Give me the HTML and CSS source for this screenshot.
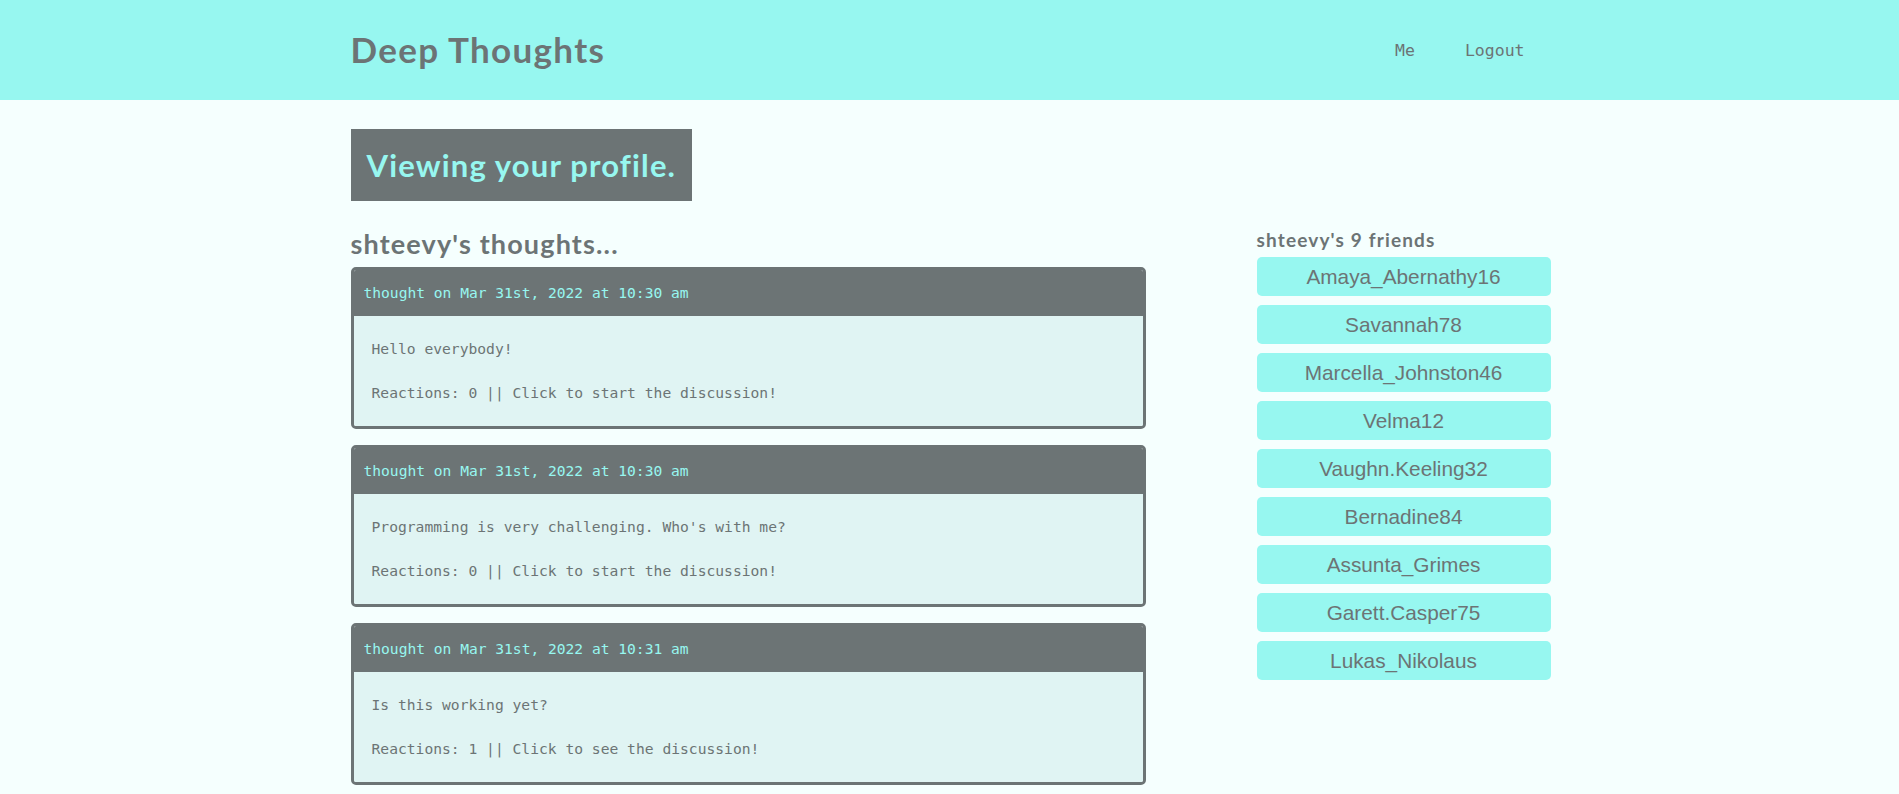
FILE: index.html
```html
<!DOCTYPE html>
<html lang="en">
<head>
<meta charset="utf-8">
<title>Deep Thoughts</title>
<link rel="stylesheet" href="styles.css">
</head>
<body>
<header class="site-header">
  <div class="container header-inner">
    <a class="brand" href="#">Deep Thoughts</a>
    <nav class="nav">
      <a href="#">Me</a>
      <a href="#">Logout</a>
    </nav>
  </div>
</header>
<main class="container main">
  <div class="profile-banner">
    <h2>Viewing your profile.</h2>
  </div>
  <div class="layout">
    <section class="thoughts">
      <h3 class="thoughts-title">shteevy's thoughts...</h3>
      <div class="card">
        <p class="card-header">thought on Mar 31st, 2022 at 10:30 am</p>
        <div class="card-body">
          <p>Hello everybody!</p>
          <p>Reactions: 0 || Click to start the discussion!</p>
        </div>
      </div>
      <div class="card">
        <p class="card-header">thought on Mar 31st, 2022 at 10:30 am</p>
        <div class="card-body">
          <p>Programming is very challenging. Who's with me?</p>
          <p>Reactions: 0 || Click to start the discussion!</p>
        </div>
      </div>
      <div class="card">
        <p class="card-header">thought on Mar 31st, 2022 at 10:31 am</p>
        <div class="card-body">
          <p>Is this working yet?</p>
          <p>Reactions: 1 || Click to see the discussion!</p>
        </div>
      </div>
    </section>
    <aside class="friends">
      <h5 class="friends-title">shteevy's 9 friends</h5>
      <button class="friend">Amaya_Abernathy16</button>
      <button class="friend">Savannah78</button>
      <button class="friend">Marcella_Johnston46</button>
      <button class="friend">Velma12</button>
      <button class="friend">Vaughn.Keeling32</button>
      <button class="friend">Bernadine84</button>
      <button class="friend">Assunta_Grimes</button>
      <button class="friend">Garett.Casper75</button>
      <button class="friend">Lukas_Nikolaus</button>
    </aside>
  </div>
</main>
</body>
</html>
```

FILE: styles.css
```css
* { box-sizing: border-box; }

html, body {
  margin: 0;
  padding: 0;
}

body {
  background: #f5fffe;
  color: #6c7475;
  font-family: "Lato", "Open Sans", sans-serif;
  overflow: hidden;
}

.container {
  width: 1200px;
  margin: 0 auto;
}

.site-header {
  background: #97f7f0;
  height: 100px;
}

.header-inner {
  height: 100%;
  display: flex;
  align-items: center;
  justify-content: space-between;
}

.brand {
  color: #6c7475;
  text-decoration: none;
  font-family: "Lato", sans-serif;
  font-weight: 700;
  font-size: 35px;
  letter-spacing: 1.3px;
  padding-left: 1px;
  margin-top: -2px;
}

.nav {
  display: flex;
  gap: 50px;
  padding-right: 25px;
}

.nav a {
  color: #6c7475;
  text-decoration: none;
  font-family: "DejaVu Sans Mono", monospace;
  font-size: 16.5px;
}

.main {
  padding-top: 29px;
}

.profile-banner {
  display: inline-block;
  background: #6c7475;
  margin-left: 1px;
  height: 72px;
  padding: 0 16px;
}

.profile-banner h2 {
  margin: 0;
  line-height: 72px;
  color: #97f7f0;
  font-family: "Lato", sans-serif;
  font-weight: 700;
  font-size: 31px;
  letter-spacing: 1.15px;
}

.layout {
  display: flex;
  justify-content: space-between;
  margin-top: 20px;
}

.thoughts {
  width: 796px;
  padding-left: 1px;
}

.thoughts-title {
  margin: 4px 0 4px;
  font-family: "Lato", sans-serif;
  font-weight: 700;
  font-size: 27px;
  line-height: 38px;
  letter-spacing: 1.15px;
  color: #6c7475;
}

.card {
  border: 3px solid #6c7475;
  border-radius: 5px;
  margin-bottom: 16px;
  overflow: hidden;
}

.card-header {
  margin: 0;
  background: #6c7475;
  color: #97f7f0;
  height: 46px;
  line-height: 46px;
  padding: 0 10px;
  font-family: "DejaVu Sans Mono", monospace;
  font-size: 14.6px;
}

.card-body {
  background: #e0f4f3;
  padding: 21px 18px 21px;
  display: flex;
  flex-direction: column;
  gap: 20px;
}

.card-body p {
  margin: 0;
  line-height: 24px;
  font-family: "DejaVu Sans Mono", monospace;
  font-size: 14.65px;
  color: #6c7475;
}

.friends {
  width: 294px;
  margin-right: -1px;
  padding-top: 7px;
  display: flex;
  flex-direction: column;
  gap: 9px;
}

.friends-title {
  margin: 0 0 -4px;
  font-family: "Lato", sans-serif;
  font-weight: 700;
  font-size: 19px;
  line-height: 24px;
  letter-spacing: 1.15px;
  color: #6c7475;
}

.friend {
  height: 39px;
  border: none;
  border-radius: 5px;
  background: #97f7f0;
  color: #6c7475;
  font-family: "Liberation Sans", Arial, sans-serif;
  font-size: 20.8px;
  padding: 0;
  text-align: center;
}
```
